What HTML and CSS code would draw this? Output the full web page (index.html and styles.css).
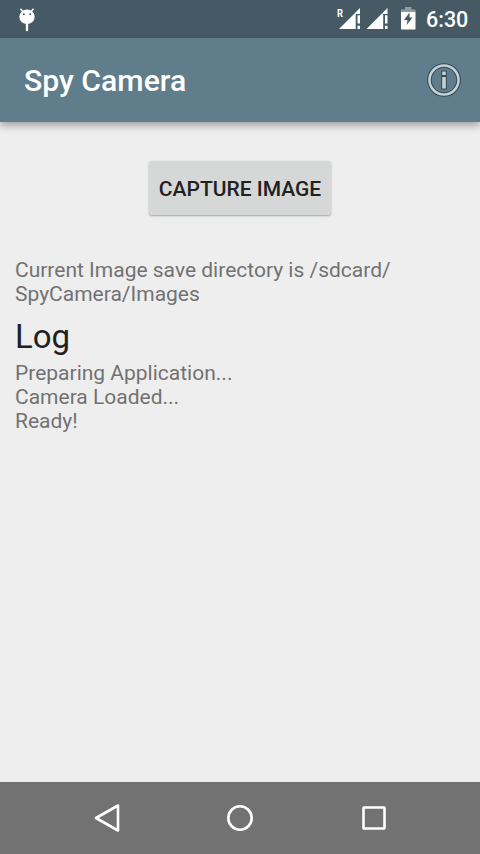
FILE: index.html
```html
<!DOCTYPE html>
<html lang="en">
<head>
<meta charset="utf-8">
<title>Spy Camera</title>
<link rel="stylesheet" href="styles.css">
</head>
<body>
<div class="status">
  <svg class="robot" width="20" height="26" viewBox="0 0 20 26"><path d="M3.500 1.800l3 3.500M16.500 1.800l-3 3.500" stroke="#fff" stroke-width="1.500"/><ellipse cx="10" cy="9.800" rx="7.700" ry="7.200" fill="#fff"/><path d="M10 16v7" stroke="#fff" stroke-width="2.400" stroke-linecap="round"/><circle cx="6.800" cy="7.300" r="1" fill="#455a64"/><circle cx="13.200" cy="7.300" r="1" fill="#455a64"/></svg>
  <div class="indicators">
    <svg class="signals" width="54" height="24" viewBox="0 0 54 24"><text class="roam" x="0" y="10" textLength="6" lengthAdjust="spacingAndGlyphs">R</text><path d="M2 22L23 1V7H18.700V22zM29.500 22L50.500 1V7H46.200V22z" fill="#fff"/><path d="M20.500 8.200h2.500v8.300h-2.500zM20.500 18.800h2.500v3.200h-2.500zM48 8.200h2.500v8.300h-2.500zM48 18.800h2.500v3.200h-2.500z" fill="#fff"/></svg>
    <svg class="battery" width="15" height="23" viewBox="0 0 15 23"><path d="M0 2.500h4V0h6.500v2.500h4V5H0z" fill="#8f9ba1"/><path d="M0 5h14.500v16.700q0 .8-.8.800H.8q-.8 0-.8-.8z" fill="#fff"/><path d="M8.500 5.500L3 13h3.500l-.8 5L11.500 10.500H8.500z" fill="#455a64"/></svg>
    <span class="time">6:30</span>
  </div>
</div>
<header class="appbar">
  <h1>Spy Camera</h1>
  <svg width="34" height="34" viewBox="0 0 34 34"><circle cx="17" cy="17" r="14.500" fill="none" stroke="#334a54" stroke-width="4.600"/><circle cx="17" cy="17" r="14.500" fill="none" stroke="#c5d1d6" stroke-width="2.500"/><path d="M15.200 8.500h3.600v3.400h-3.600zM15.200 14h3.600v11.500h-3.600z" fill="#c5d1d6" stroke="#334a54" stroke-width="2" paint-order="stroke"/></svg>
</header>
<main>
  <button class="capture">CAPTURE IMAGE</button>
  <p class="directory">Current Image save directory is /sdcard/<br>SpyCamera/Images</p>
  <h2>Log</h2>
  <p class="log">Preparing Application...<br>Camera Loaded...<br>Ready!</p>
</main>
<nav>
  <svg width="28" height="32" viewBox="0 0 28 32"><path d="M4 16L26 3.500V28.500z"/></svg>
  <svg width="28" height="32" viewBox="0 0 28 32"><circle cx="14" cy="16" r="11.700"/></svg>
  <svg width="28" height="32" viewBox="0 0 28 32"><rect x="3.500" y="5.500" width="21" height="21" rx=".5"/></svg>
</nav>
</body>
</html>
```

FILE: styles.css
```css
* { box-sizing: border-box; }
body {
  margin: 0;
  height: 854px;
  display: flex;
  flex-direction: column;
  background: #eee;
  font-family: Roboto, sans-serif;
  overflow: hidden;
}
h1, h2, p { margin: 0; }
svg { display: block; flex: none; }
.status {
  height: 38px;
  flex: none;
  display: flex;
  justify-content: space-between;
  align-items: flex-start;
  padding: 7px 12px 0 17px;
  background: #455a64;
  color: #fff;
}
.indicators { display: flex; align-items: flex-start; }
.roam { font-size: 11px; font-weight: 700; fill: #fff; }
.battery { margin: 0 10px; }
.time { width: 42px; font-size: 21.5px; font-weight: 500; line-height: 26px; }
.appbar {
  height: 84px;
  flex: none;
  display: flex;
  justify-content: space-between;
  align-items: center;
  padding: 0 19px 0 24px;
  background: #607d8b;
  color: #fff;
  box-shadow: 0 4px 7px rgba(0, 0, 0, .3);
}
h1 { padding-top: 2px; font-size: 30.2px; font-weight: 500; line-height: 36px; }
main {
  flex: 1;
  display: flex;
  flex-direction: column;
  align-items: flex-start;
  padding: 39px 15px 0;
}
.capture {
  align-self: center;
  width: 182px;
  height: 54px;
  padding: 2px 0 0;
  border: 0;
  border-radius: 3px;
  background: #d6d7d7;
  box-shadow: 0 1px 2px rgba(0, 0, 0, .3);
  color: #212121;
  font: 500 21px/52px Roboto, sans-serif;
  white-space: nowrap;
}
.directory, .log {
  color: #727272;
  font-size: 21px;
  line-height: 24px;
  white-space: nowrap;
}
.directory { margin-top: 43px; }
h2 {
  margin-top: 11px;
  color: #212121;
  font-size: 33px;
  font-weight: 400;
  line-height: 40px;
}
.log { margin-top: 4px; }
nav {
  height: 72px;
  flex: none;
  display: flex;
  justify-content: space-between;
  align-items: center;
  padding: 0 92px;
  background: #727272;
}
nav svg { fill: none; stroke: #fff; stroke-width: 2.6; stroke-linejoin: round; }
```
